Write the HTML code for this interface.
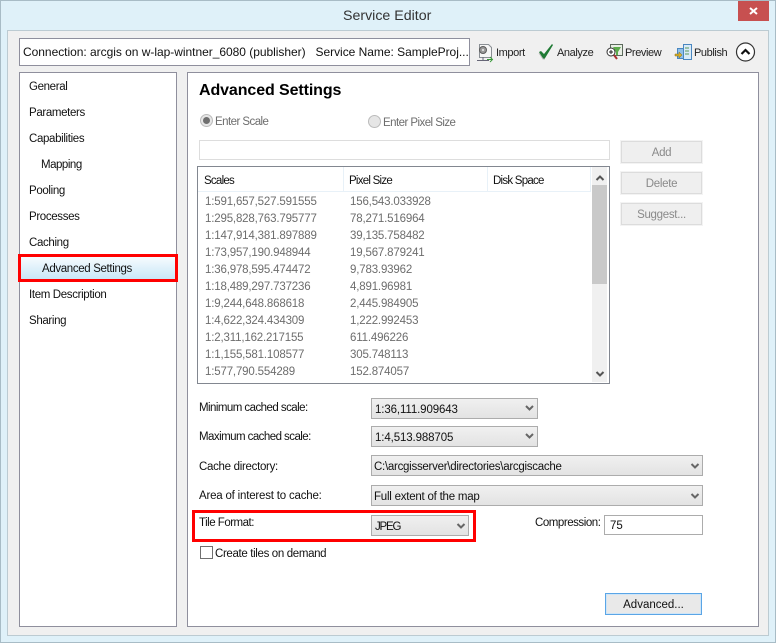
<!DOCTYPE html>
<html><head><meta charset="utf-8"><style>
html,body{margin:0;padding:0}
body{width:776px;height:643px;position:relative;overflow:hidden;background:#dff1f9;font:11.5px "Liberation Sans",sans-serif;color:#111}
div,span.t{position:absolute;box-sizing:border-box}
.t{white-space:nowrap;line-height:14px;letter-spacing:-.35px;margin-top:1px}
.g{color:#6d6d6d;letter-spacing:-.55px}
.n{color:#6d6d6d;letter-spacing:-.17px}
.h{letter-spacing:-.75px}
.l{letter-spacing:-.55px}
.tb{font-size:11px;letter-spacing:-.4px;color:#222}
.sel{background:linear-gradient(#f0f0f0,#e3e3e3);border:1px solid #acacac;height:21px}
.btn{background:#efefef;border:1px solid #dcdcdc;outline:1px solid #f3f3f3;width:81px;height:22px;left:621px;text-align:center;color:#8a8a8a;line-height:22px;letter-spacing:-.3px}
</style></head><body>
<div style="left:0;top:0;width:776px;height:643px;border:1px solid #a8bcc6"></div>
<span class="t" style="left:343px;top:6px;font-size:14.2px;line-height:18px;color:#333;letter-spacing:0">Service Editor</span>
<div style="left:738px;top:1px;width:31px;height:20px;background:#c75050"></div>
<svg width="776" height="30" style="position:absolute;left:0;top:0"><path d="M750 8l7 6M757 8l-7 6" stroke="#fff" stroke-width="2"/></svg>
<div style="left:7px;top:30px;width:762px;height:606px;background:#f0f0f0;border:1px solid #bccbd2"></div>
<div style="left:19px;top:38px;width:451px;height:28px;background:#fff;border:1px solid #8f8f9d"></div>
<span class="t" style="left:23px;top:44px;font-size:12px;color:#111;letter-spacing:-.03px">Connection: arcgis on w-lap-wintner_6080 (publisher)&nbsp;&nbsp; Service Name: SampleProj...</span>

<svg width="776" height="70" style="position:absolute;left:0;top:0">
<path d="M479.500 44.500h9l3 3v10h-12z" fill="#f6f6f6" stroke="#8a8f94"/><circle cx="483" cy="50" r="3.500" fill="#9a9a9a" stroke="#5c5c5c"/><circle cx="483" cy="50" r="1" fill="#eee"/><path d="M477 60.500h12M483 57v3" stroke="#667" /><path d="M487 59.500h5M490 57l2.500 2.500-2.500 2.500" stroke="#3a9a3a" fill="none"/>
<path d="M539 52l2-1 3 3 8-10 1 1-8.500 14h-1.500z" fill="#1f7a34"/><path d="M539 53l4 6h2" stroke="#bbb" fill="none"/>
<rect x="610.500" y="44.500" width="12" height="11" fill="#e9efe6" stroke="#5c6a5c"/><path d="M613 47h8l-3 5v3h-2v-3z" fill="#5cab4b"/><circle cx="611" cy="52" r="4" fill="#fff" stroke="#333"/><path d="M609 52h4M611 50v4" stroke="#222"/><path d="M614 55l3 4" stroke="#a33" stroke-width="2"/>
<rect x="683.500" y="44.500" width="8" height="15" fill="#d9ebf8" stroke="#4a87c0"/><path d="M685 48h4M685 51h4M685 54h4" stroke="#5a9a5a"/><rect x="677.500" y="48.500" width="6" height="10" fill="#8fbfe8" stroke="#4a87c0"/><path d="M675 54h4v-2l3 3-3 3v-2h-4z" fill="#d8b028" stroke="#8a6d10" stroke-width=".5"/>
<circle cx="745.500" cy="52" r="9" fill="#fff" stroke="#333" stroke-width="1.2"/><path d="M741.500 54l4-4 4 4" stroke="#111" stroke-width="2.200" fill="none"/>
</svg>
<span class="t tb" style="left:496px;top:45px">Import</span>
<span class="t tb" style="left:557px;top:45px">Analyze</span>
<span class="t tb" style="left:625px;top:45px">Preview</span>
<span class="t tb" style="left:694px;top:45px">Publish</span>

<div style="left:19px;top:72px;width:158px;height:555px;background:#fff;border:1px solid #8f8f9d"></div>
<div style="left:187px;top:72px;width:572px;height:555px;background:#fff;border:1px solid #8f8f9d"></div>

<span class="t" style="left:29px;top:79px">General</span>
<span class="t" style="left:29px;top:105px">Parameters</span>
<span class="t" style="left:29px;top:131px">Capabilities</span>
<span class="t" style="left:41px;top:157px;letter-spacing:-.48px">Mapping</span>
<span class="t" style="left:29px;top:183px">Pooling</span>
<span class="t" style="left:29px;top:209px">Processes</span>
<span class="t" style="left:29px;top:235px">Caching</span>
<div style="left:18px;top:254px;width:160px;height:28px;background:linear-gradient(#f6fbfe,#c9e7f7);border:3px solid #f00"></div>
<span class="t" style="left:42px;top:261px">Advanced Settings</span>
<span class="t" style="left:29px;top:287px">Item Description</span>
<span class="t" style="left:29px;top:313px">Sharing</span>

<span class="t" style="left:199px;top:80px;font-size:16px;line-height:20px;font-weight:bold;letter-spacing:-.1px;color:#000">Advanced Settings</span>

<div style="left:200px;top:114px;width:13px;height:13px;border-radius:50%;background:#e6e6e6;border:1px solid #bbb"></div>
<div style="left:203px;top:117px;width:7px;height:7px;border-radius:50%;background:#6f6f6f"></div>
<span class="t g" style="left:215px;top:114px">Enter Scale</span>
<div style="left:368px;top:115px;width:13px;height:13px;border-radius:50%;background:#e6e6e6;border:1px solid #bbb"></div>
<span class="t g" style="left:383px;top:115px">Enter Pixel Size</span>

<div style="left:199px;top:140px;width:411px;height:20px;background:#fff;border:1px solid #ddd"></div>
<div class="btn" style="top:141px">Add</div>
<div class="btn" style="top:172px">Delete</div>
<div class="btn" style="top:203px">Suggest...</div>

<div style="left:197px;top:166px;width:413px;height:218px;background:#fff;border:1px solid #828790"></div>
<div style="left:198px;top:167px;width:393px;height:25px;border-bottom:1px solid #e8f1f8"></div>
<div style="left:343px;top:167px;width:1px;height:24px;background:#e8f1f8"></div>
<div style="left:487px;top:167px;width:1px;height:24px;background:#e8f1f8"></div>
<div style="left:590px;top:167px;width:1px;height:24px;background:#e8f1f8"></div>
<span class="t h" style="left:204px;top:173px">Scales</span>
<span class="t h" style="left:349px;top:173px">Pixel Size</span>
<span class="t h" style="left:493px;top:173px">Disk Space</span>
<div style="left:592px;top:167px;width:15px;height:215px;background:#f0f0f0"></div>
<div style="left:592px;top:185px;width:15px;height:99px;background:#c9c9c9"></div>
<svg width="776" height="400" style="position:absolute;left:0;top:0"><path d="M596.500 180l3.500-3.500 3.500 3.500M596.500 372l3.500 3.500 3.500-3.500" stroke="#555" stroke-width="2" fill="none"/></svg>

<span class="t n" style="left:205px;top:194px">1:591,657,527.591555</span><span class="t n" style="left:350px;top:194px">156,543.033928</span>
<span class="t n" style="left:205px;top:211px">1:295,828,763.795777</span><span class="t n" style="left:350px;top:211px">78,271.516964</span>
<span class="t n" style="left:205px;top:228px">1:147,914,381.897889</span><span class="t n" style="left:350px;top:228px">39,135.758482</span>
<span class="t n" style="left:205px;top:245px">1:73,957,190.948944</span><span class="t n" style="left:350px;top:245px">19,567.879241</span>
<span class="t n" style="left:205px;top:262px">1:36,978,595.474472</span><span class="t n" style="left:350px;top:262px">9,783.93962</span>
<span class="t n" style="left:205px;top:279px">1:18,489,297.737236</span><span class="t n" style="left:350px;top:279px">4,891.96981</span>
<span class="t n" style="left:205px;top:296px">1:9,244,648.868618</span><span class="t n" style="left:350px;top:296px">2,445.984905</span>
<span class="t n" style="left:205px;top:313px">1:4,622,324.434309</span><span class="t n" style="left:350px;top:313px">1,222.992453</span>
<span class="t n" style="left:205px;top:330px">1:2,311,162.217155</span><span class="t n" style="left:350px;top:330px">611.496226</span>
<span class="t n" style="left:205px;top:347px">1:1,155,581.108577</span><span class="t n" style="left:350px;top:347px">305.748113</span>
<span class="t n" style="left:205px;top:364px">1:577,790.554289</span><span class="t n" style="left:350px;top:364px">152.874057</span>

<span class="t l" style="left:199px;top:400px">Minimum cached scale:</span>
<div class="sel" style="left:371px;top:398px;width:167px"></div><span class="t" style="left:375px;top:402px;letter-spacing:-.12px">1:36,111.909643</span>
<span class="t l" style="left:199px;top:429px">Maximum cached scale:</span>
<div class="sel" style="left:371px;top:426px;width:167px"></div><span class="t" style="left:375px;top:430px;letter-spacing:-.12px">1:4,513.988705</span>
<span class="t" style="left:199px;top:459px;letter-spacing:-.3px">Cache directory:</span>
<div class="sel" style="left:371px;top:455px;width:332px"></div><span class="t" style="left:374px;top:459px;letter-spacing:-.27px">C:\arcgisserver\directories\arcgiscache</span>
<span class="t" style="left:199px;top:488px;letter-spacing:-.2px">Area of interest to cache:</span>
<div class="sel" style="left:371px;top:485px;width:332px"></div><span class="t" style="left:374px;top:489px;letter-spacing:-.23px">Full extent of the map</span>

<div style="left:192px;top:510px;width:284px;height:32px;border:3px solid #f00"></div>
<span class="t" style="left:199px;top:515px;letter-spacing:-.5px">Tile Format:</span>
<div class="sel" style="left:371px;top:515px;width:98px"></div><span class="t" style="left:375px;top:519px;letter-spacing:-1.2px">JPEG</span>
<span class="t" style="left:535px;top:515px;letter-spacing:-.46px">Compression:</span>
<div style="left:604px;top:515px;width:99px;height:20px;background:#fff;border:1px solid #acacac"></div>
<span class="t" style="left:610px;top:518px;letter-spacing:0">75</span>

<div style="left:200px;top:546px;width:13px;height:13px;background:#fff;border:1px solid #707070"></div>
<span class="t" style="left:215px;top:546px">Create tiles on demand</span>

<div style="left:605px;top:593px;width:97px;height:22px;background:#e9e9e9;border:1px solid #5aa5e6;box-shadow:inset 0 0 0 1px #cfe5f7;text-align:center;line-height:22px;color:#111">Advanced...</div>

<svg width="776" height="643" style="position:absolute;left:0;top:0"><path d="M526 406l3.500 3.500 3.500-3.500M526 434l3.500 3.500 3.500-3.500M691.500 464l3.500 3.500 3.500-3.500M691.500 494l3.500 3.500 3.500-3.500M457.500 524l3.500 3.500 3.500-3.500" stroke="#666" stroke-width="2" fill="none"/></svg>
</body></html>
